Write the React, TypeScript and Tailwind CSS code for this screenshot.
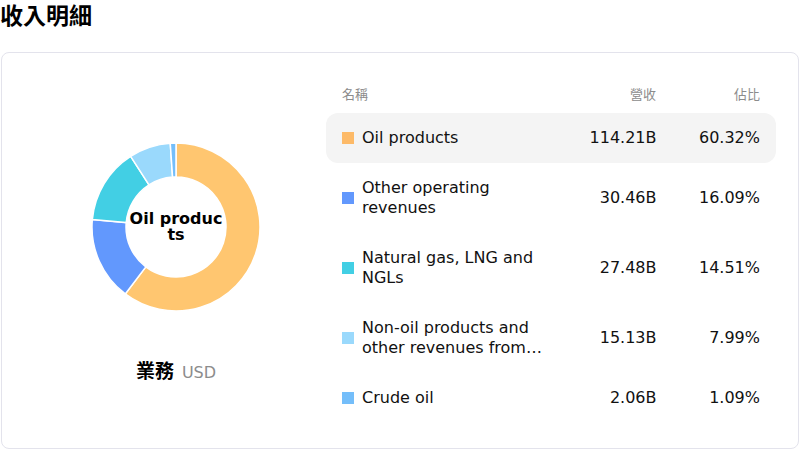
import React from 'react';

const rows = [
  { name: 'Oil products', value: '114.21B', pct: 60.32, color: '#fdba68', slice: '#ffc670' },
  { name: 'Other operating revenues', value: '30.46B', pct: 16.09, color: '#6298fd', slice: '#6298fd' },
  { name: 'Natural gas, LNG and NGLs', value: '27.48B', pct: 14.51, color: '#42cfe4', slice: '#42cfe4' },
  { name: 'Non-oil products and other revenues from sources', value: '15.13B', pct: 7.99, color: '#9ad9fc', slice: '#9ad9fc' },
  { name: 'Crude oil', value: '2.06B', pct: 1.09, color: '#74befa', slice: '#74befa' },
];

const arc = (start: number, end: number, ro: number, ri: number) => {
  const p = (a: number, r: number) => {
    const t = (a / 100) * Math.PI * 2 - Math.PI / 2;
    return `${(r * Math.cos(t)).toFixed(2)} ${(r * Math.sin(t)).toFixed(2)}`;
  };
  const large = end - start > 50 ? 1 : 0;
  return `M ${p(start, ro)} A ${ro} ${ro} 0 ${large} 1 ${p(end, ro)} L ${p(end, ri)} A ${ri} ${ri} 0 ${large} 0 ${p(start, ri)} Z`;
};

const Donut = () => {
  let acc = 0;
  return (
    <svg width="180" height="180" viewBox="-90 -90 180 180">
      {rows.map((r, i) => {
        const s = acc;
        acc += r.pct;
        return <path key={i} d={arc(s, acc, 84, 50)} fill={r.slice} stroke="#fff" strokeWidth="1.5" />;
      })}
    </svg>
  );
};

export default function App() {
  return (
    <div className="w-[800px] h-[450px] bg-white overflow-hidden" style={{ fontFamily: '"DejaVu Sans", "Noto Sans CJK TC", sans-serif' }}>
      <h1 className="text-[23px] font-bold leading-[32px] text-black">收入明細</h1>
      <div className="mt-[20px] mx-px h-[397px] rounded-lg border border-[#e3e3ec] flex">
        <div className="w-[324px] flex flex-col items-center pl-[24px]">
          <div className="relative mt-[84px] w-[180px] h-[180px]">
            <Donut />
            <div className="absolute inset-0 flex items-center justify-center">
              <div className="w-[96px] text-center text-[16px] font-bold leading-[16px] break-all text-black">Oil products</div>
            </div>
          </div>
          <div className="mt-[40px] flex items-baseline gap-2">
            <span className="text-[19px] font-bold text-black">業務</span>
            <span className="text-[16px] text-[#8c8c8c]">USD</span>
          </div>
        </div>
        <div className="w-[450px] pt-[32px]">
          <div className="flex text-[13px] text-[#8c8c8c] h-[28px] px-4">
            <div className="flex-1">名稱</div>
            <div className="w-[110px] text-right">營收</div>
            <div className="w-[104px] text-right">佔比</div>
          </div>
          {rows.map((r, i) => (
            <div key={i} className={`flex items-center px-4 py-[15px] rounded-xl text-[16px] leading-[20px] text-[#111] ${i === 0 ? 'bg-[#f4f4f4]' : ''}`}>
              <div className="flex-1 flex items-center">
                <span className="w-3 h-3 mr-[8px] shrink-0" style={{ background: r.color }} />
                <span className="w-[185px] line-clamp-2">{r.name}</span>
              </div>
              <div className="w-[110px] text-right">{r.value}</div>
              <div className="w-[104px] text-right">{r.pct.toFixed(2)}%</div>
            </div>
          ))}
        </div>
      </div>
    </div>
  );
}
